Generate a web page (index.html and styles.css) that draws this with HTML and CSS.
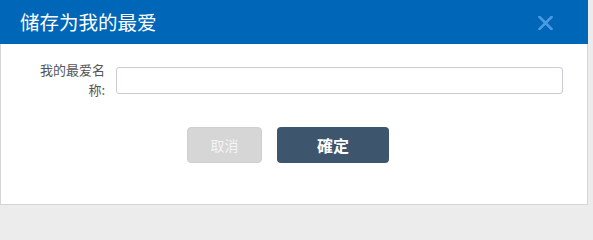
FILE: index.html
```html
<!DOCTYPE html>
<html lang="zh">
<head>
<meta charset="utf-8">
<title>储存为我的最爱</title>
<link rel="stylesheet" href="styles.css">
</head>
<body>
<div class="dialog">
  <div class="header">
    <span class="title">储存为我的最爱</span>
    <span class="close" aria-label="关闭">
      <svg width="15" height="14" viewBox="0 0 15 14"><path d="M1.5 1 L13.5 13 M13.5 1 L1.5 13" stroke="#4a9be2" stroke-width="2.6" stroke-linecap="square" fill="none"/></svg>
    </span>
  </div>
  <div class="row">
    <label class="label" for="name">我的最爱名称:</label>
    <input class="input" id="name" type="text">
  </div>
  <div class="actions">
    <button class="btn cancel">取消</button>
    <button class="btn ok">確定</button>
  </div>
</div>
</body>
</html>
```
FILE: styles.css
```css
html, body {
  margin: 0;
  padding: 0;
  background: #ececec;
  font-family: "Noto Sans CJK SC", "Noto Sans", sans-serif;
}
.dialog {
  box-sizing: border-box;
  width: 588px;
  height: 205px;
  background: #fff;
  border: 1px solid #d6d6d6;
  border-top: none;
  display: flex;
  flex-direction: column;
}
.header {
  margin: 0 -1px;
  height: 44px;
  background: #0066b8;
  display: flex;
  align-items: center;
  justify-content: space-between;
  padding: 0 35px 0 20px;
}
.title {
  color: #fff;
  font-size: 19.5px;
  line-height: 24px;
  letter-spacing: 0;
}
.close {
  display: flex;
  width: 15px;
  height: 14px;
  margin-top: 1px;
}
.row {
  display: flex;
  align-items: center;
  margin-top: 16px;
  gap: 11px;
}
.label {
  width: 104px;
  text-align: right;
  font-size: 13px;
  line-height: 20px;
  color: #555;
  padding-left: 38px;
  box-sizing: border-box;
}
.input {
  box-sizing: border-box;
  width: 447px;
  height: 27px;
  border: 1px solid #c9ccd8;
  border-radius: 3px;
  margin: 0;
  padding: 0 6px;
  background: #fff;
}
.actions {
  display: flex;
  gap: 15px;
  margin-top: 27px;
  padding-left: 186px;
}
.btn {
  box-sizing: border-box;
  height: 36px;
  border: none;
  border-radius: 4px;
  font-family: "Noto Sans CJK SC", "Noto Sans", sans-serif;
  color: #fff;
  padding: 0;
  margin: 0;
}
.cancel {
  width: 75px;
  background: #d6d6d6;
  border: 1px solid #cfcfcf;
  font-size: 14px;
  color: #f4f4f4;
}
.ok {
  width: 112px;
  background: #3d566e;
  font-size: 16px;
  font-weight: bold;
}
```
